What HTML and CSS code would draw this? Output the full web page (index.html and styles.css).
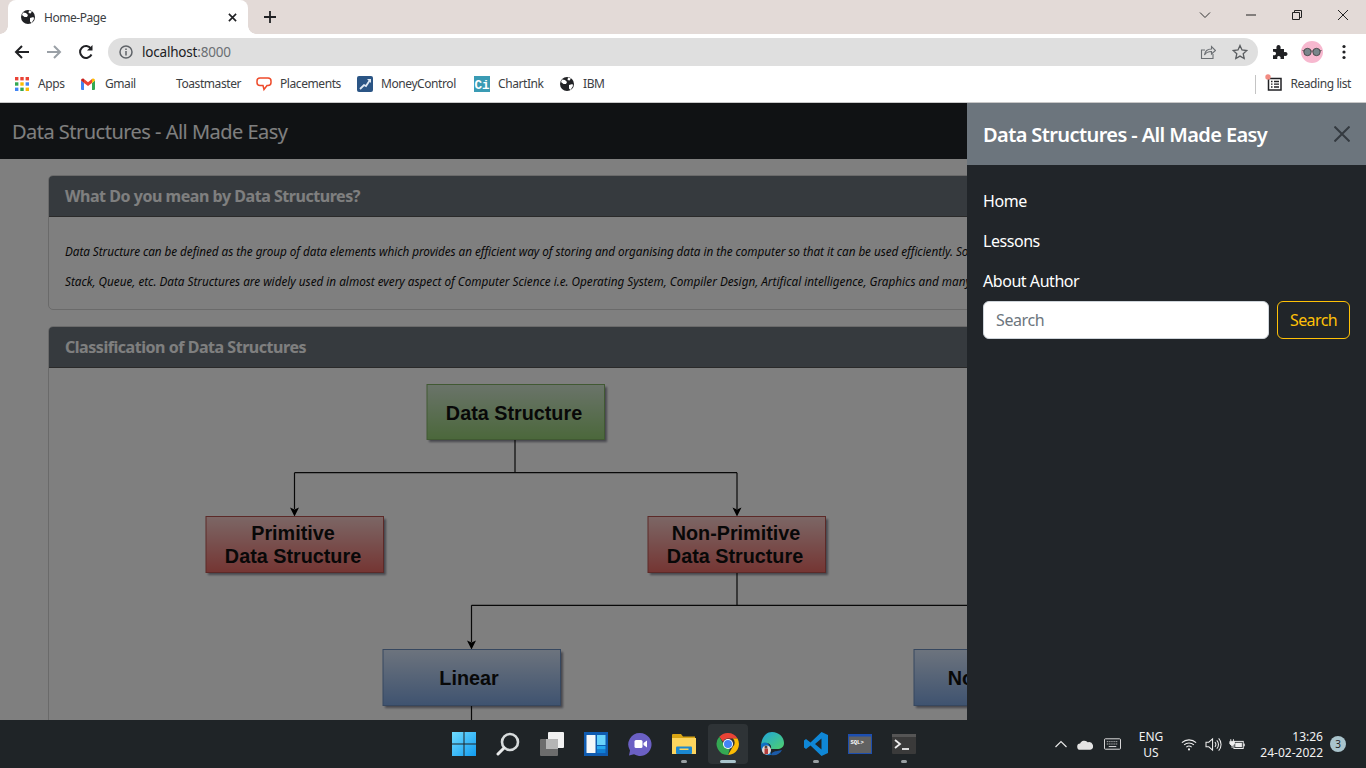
FILE: index.html
```html
<!DOCTYPE html>
<html lang="en">
<head>
<meta charset="utf-8">
<title>Home-Page</title>
<link rel="stylesheet" href="styles.css">
</head>
<body>
<div class="desktop">
  <header class="browser">
    <div class="tabstrip">
      <div class="tab">
        <svg class="ico16" viewBox="0 0 16 16"><circle cx="8" cy="8" r="7" fill="#202124"/><path d="M3 3.500l3 .5 2 2-1 2-2.500 0L2 6zM9 1.500l3 1-1.500 2-2-.5zM10 9l3.500-1 .5 2-2.500 4-1.500-1.500z" fill="#fff"/></svg>
        <span class="tab-title">Home-Page</span>
        <svg class="tab-close" viewBox="0 0 10 10"><path d="M1 1l8 8M9 1l-8 8" stroke="#202124" stroke-width="1.800"/></svg>
      </div>
      <svg class="tab-new" viewBox="0 0 12 12"><path d="M6 0v12M0 6h12" stroke="#202124" stroke-width="1.800"/></svg>
      <div class="win-controls">
        <svg class="win-btn chev" viewBox="0 0 12 12"><path d="M1 3.500l5 5 5-5" fill="none" stroke="#333" stroke-width="1"/></svg>
        <svg class="win-btn min" viewBox="0 0 12 12"><path d="M1 6h10" stroke="#222" stroke-width="1"/></svg>
        <svg class="win-btn max" viewBox="0 0 12 12"><path d="M1.500 3.500h7v7h-7zM3.500 3.500v-2h7v7h-2" fill="none" stroke="#222" stroke-width="1"/></svg>
        <svg class="win-btn cls" viewBox="0 0 12 12"><path d="M1 1l10 10M11 1L1 11" stroke="#222" stroke-width="1"/></svg>
      </div>
    </div>
    <div class="toolbar">
      <svg class="nav-ico first" viewBox="0 0 16 16"><path d="M15 8H2M8 2L2 8l6 6" fill="none" stroke="#202124" stroke-width="2"/></svg>
      <svg class="nav-ico" viewBox="0 0 16 16"><path d="M1 8h13M8 2l6 6-6 6" fill="none" stroke="#9aa0a6" stroke-width="2"/></svg>
      <svg class="nav-ico" viewBox="0 0 16 16"><path d="M13.500 10.500A6 6 0 1 1 13 4.500" fill="none" stroke="#202124" stroke-width="2"/><path d="M14.500 1v5.500H9z" fill="#202124"/></svg>
      <div class="omnibox">
        <svg class="ico14" viewBox="0 0 14 14"><circle cx="7" cy="7" r="6" fill="none" stroke="#5f6368" stroke-width="1.500"/><path d="M7 6v4.500M7 3.500v1.500" stroke="#5f6368" stroke-width="1.500"/></svg>
        <span class="url"><span class="url-host">localhost</span>:8000</span>
        <svg class="omni-share" viewBox="0 0 16 16"><path d="M13 10v4.500H1.500V6H5" fill="none" stroke="#6b6f73" stroke-width="1.100"/><path d="M4.500 11c.5-4 3.500-6 7-6V2.500L15.500 6.500 11.500 10V7.500c-3 0-5.500 1-7 3.500z" fill="none" stroke="#6b6f73" stroke-width="1.100"/></svg>
        <svg class="omni-star" viewBox="0 0 16 16"><path d="M8 1.500l2 4.500 4.800.5-3.600 3.200 1 4.800L8 12.100l-4.200 2.400 1-4.800L1.200 6.500 6 6z" fill="none" stroke="#5a5d60" stroke-width="1.300"/></svg>
      </div>
      <svg class="tool-puzzle" viewBox="0 0 16 16"><path d="M1 5h3.500C4 2.500 5 1 6.500 1S9 2.500 8.500 5H12v3.200c2.300-.6 3.500.4 3.500 1.800s-1.200 2.400-3.500 1.800V15H8.500c.5-2.200-.5-3-1.800-3S5 12.800 5.300 15H1v-3.800c2 .5 3-.3 3-1.700S3 7.300 1 7.800z" fill="#202124"/></svg>
      <svg class="tool-avatar" viewBox="0 0 22 22"><circle cx="11" cy="11" r="11" fill="#f7b8cf"/><circle cx="6.500" cy="11" r="3.700" fill="#78858a" stroke="#3a3a3a" stroke-width=".8"/><circle cx="15.500" cy="11" r="3.700" fill="#78858a" stroke="#3a3a3a" stroke-width=".8"/><path d="M10.200 10h1.600M1.500 9.500L3 10M19 10l1.500-.5" stroke="#3a3a3a" stroke-width=".9"/></svg>
      <svg class="tool-menu" viewBox="0 0 4 16"><circle cx="2" cy="2.500" r="1.600" fill="#202124"/><circle cx="2" cy="8" r="1.600" fill="#202124"/><circle cx="2" cy="13.500" r="1.600" fill="#202124"/></svg>
    </div>
    <div class="bookmarks">
      <div class="bm bm-apps">
        <svg class="ico14" viewBox="0 0 14 14"><g><rect x="0" y="0" width="3.400" height="3.400" fill="#ea4335"/><rect x="5.300" y="0" width="3.400" height="3.400" fill="#ea4335"/><rect x="10.600" y="0" width="3.400" height="3.400" fill="#ea4335"/><rect x="0" y="5.300" width="3.400" height="3.400" fill="#34a853"/><rect x="5.300" y="5.300" width="3.400" height="3.400" fill="#fbbc04"/><rect x="10.600" y="5.300" width="3.400" height="3.400" fill="#4285f4"/><rect x="0" y="10.600" width="3.400" height="3.400" fill="#4285f4"/><rect x="5.300" y="10.600" width="3.400" height="3.400" fill="#34a853"/><rect x="10.600" y="10.600" width="3.400" height="3.400" fill="#fbbc04"/></g></svg>
        <span>Apps</span>
      </div>
      <div class="bm bm-gmail">
        <svg class="ico14" viewBox="0 0 14 12"><path d="M0 2.500V11a1 1 0 0 0 1 1h2V5z" fill="#4285f4"/><path d="M14 2.500V11a1 1 0 0 1-1 1h-2V5z" fill="#34a853"/><path d="M3 5V1L7 4.200 11 1v4L7 8z" fill="#ea4335"/><path d="M0 2.500C0 .8 1.800 0 3 1v4z" fill="#c5221f"/><path d="M14 2.500C14 .8 12.200 0 11 1v4z" fill="#fbbc04"/></svg>
        <span>Gmail</span>
      </div>
      <div class="bm bm-toast"><span>Toastmaster</span></div>
      <div class="bm bm-place">
        <svg class="ico16" viewBox="0 0 16 16"><path d="M4 2h8a3 3 0 0 1 3 3v1.500a3 3 0 0 1-3 3h-1L8 13.500 7 9.500H4a3 3 0 0 1-3-3V5a3 3 0 0 1 3-3z" fill="none" stroke="#ee4b2b" stroke-width="1.500"/></svg>
        <span>Placements</span>
      </div>
      <div class="bm bm-money">
        <svg class="ico16" viewBox="0 0 16 16"><rect width="16" height="16" rx="2" fill="#2b5585"/><path d="M3 13l4-4 2 1 4-6" fill="none" stroke="#dfe8f2" stroke-width="1.800"/><path d="M10 3h4v4z" fill="#dfe8f2"/></svg>
        <span>MoneyControl</span>
      </div>
      <div class="bm bm-chart">
        <svg class="ico16" viewBox="0 0 16 16"><rect width="16" height="16" fill="#3a9bb4"/><text x="8" y="12.500" class="ci-text">Ci</text></svg>
        <span>ChartInk</span>
      </div>
      <div class="bm bm-ibm">
        <svg class="ico16" viewBox="0 0 16 16"><circle cx="8" cy="8" r="7" fill="#202124"/><path d="M3 3.500l3 .5 2 2-1 2-2.500 0L2 6zM9 1.500l3 1-1.500 2-2-.5zM10 9l3.500-1 .5 2-2.500 4-1.500-1.500z" fill="#fff"/></svg>
        <span>IBM</span>
      </div>
      <div class="reading">
        <svg class="read-ico" viewBox="0 0 18 18"><path d="M3.500 4.500h12.500v11.500H3.500z" fill="none" stroke="#202124" stroke-width="1.500"/><path d="M6 7.500h1.500M9 7.500h5M6 10.200h1.500M9 10.200h5M6 13h1.500M9 13h5" stroke="#202124" stroke-width="1.300"/><circle cx="3" cy="3" r="2.700" fill="#f28b82"/></svg>
        <span>Reading list</span>
      </div>
    </div>
  </header>

  <main class="page">
    <nav class="navbar">Data Structures - All Made Easy</nav>
    <div class="content">
      <section class="card">
        <h2 class="card-head">What Do you mean by Data Structures?</h2>
        <div class="card-body">
          <p class="lead-line tight">Data Structure can be defined as the group of data elements which provides an efficient way of storing and organising data in the computer so that it can be used efficiently. So</p>
          <p class="lead-line">Stack, Queue, etc. Data Structures are widely used in almost every aspect of Computer Science i.e. Operating System, Compiler Design, Artifical intelligence, Graphics and many</p>
        </div>
      </section>
      <section class="card">
        <h2 class="card-head">Classification of Data Structures</h2>
        <svg class="diagram" viewBox="0 0 1268 360" width="1268" height="360">
          <defs>
            <linearGradient id="gGreen" x1="0" y1="0" x2="0" y2="1"><stop offset="0" stop-color="#d5e8d4"/><stop offset="1" stop-color="#97d077"/></linearGradient>
            <linearGradient id="gRed" x1="0" y1="0" x2="0" y2="1"><stop offset="0" stop-color="#f8cecc"/><stop offset="1" stop-color="#ea6b66"/></linearGradient>
            <linearGradient id="gBlue" x1="0" y1="0" x2="0" y2="1"><stop offset="0" stop-color="#dae8fc"/><stop offset="1" stop-color="#7ea6e0"/></linearGradient>
            <filter id="soft" x="-10%" y="-10%" width="125%" height="130%"><feGaussianBlur stdDeviation="1.300"/></filter>
          </defs>
          <g class="shadows" filter="url(#soft)">
            <rect x="380" y="19" width="178" height="55"/>
            <rect x="159" y="151" width="178" height="56"/>
            <rect x="601" y="151" width="178" height="56"/>
            <rect x="336" y="284" width="178" height="56"/>
            <rect x="867" y="284" width="178" height="56"/>
          </g>
          <g class="links">
            <path d="M466 71V104.700M245.500 104.700H688M245.500 104.700V141M688 104.700V141"/>
            <path d="M688 204V237.300M422.500 237.300H1132M422.500 237.300V274M422.500 337V360"/>
          </g>
          <path class="arrow" d="M241 139.500l4.500 2 4.500-2-4.500 9zM683.500 139.500l4.500 2 4.500-2-4.500 9zM418 272.500l4.500 2 4.500-2-4.500 9z"/>
          <rect class="box green" x="378" y="16.500" width="177.500" height="55"/>
          <rect class="box red" x="157" y="148.500" width="177.500" height="56"/>
          <rect class="box red" x="599" y="148.500" width="177.500" height="56"/>
          <rect class="box blue" x="334" y="281.500" width="177.500" height="56"/>
          <rect class="box blue" x="865" y="281.500" width="177.500" height="56"/>
          <text class="dtext" x="465" y="52">Data Structure</text>
          <text class="dtext" x="244" y="172">Primitive</text>
          <text class="dtext" x="244" y="195">Data Structure</text>
          <text class="dtext" x="687" y="172">Non-Primitive</text>
          <text class="dtext" x="686" y="195">Data Structure</text>
          <text class="dtext" x="420" y="317">Linear</text>
          <text class="dtext" x="951" y="317">Non-Linear</text>
        </svg>
      </section>
    </div>
    <div class="backdrop"></div>
    <aside class="panel">
      <div class="panel-head">
        <h5 class="panel-title">Data Structures - All Made Easy</h5>
        <svg class="panel-close" viewBox="0 0 16 16"><path d="M.5.500l15 15M15.500.500l-15 15" stroke="#343a40" stroke-width="2"/></svg>
      </div>
      <div class="panel-body">
        <a class="panel-link">Home</a>
        <a class="panel-link">Lessons</a>
        <a class="panel-link">About Author</a>
        <form class="search">
          <input class="search-input" type="text" placeholder="Search">
          <button class="search-btn" type="button">Search</button>
        </form>
      </div>
    </aside>
  </main>

  <footer class="taskbar">
    <div class="tb-spacer"></div>
    <div class="tb-apps">
      <div class="tb-app">
        <svg class="tb-ico" viewBox="0 0 24 24"><defs><linearGradient id="w1" x1="0" y1="0" x2="1" y2="1"><stop offset="0" stop-color="#6fdcff"/><stop offset="1" stop-color="#119bf0"/></linearGradient></defs><path d="M0 0h11.500v11.500H0zM12.500 0H24v11.500H12.500zM0 12.500h11.500V24H0zM12.500 12.500H24V24H12.500z" fill="url(#w1)"/></svg>
      </div>
      <div class="tb-app">
        <svg class="tb-ico" viewBox="0 0 24 24"><circle cx="14" cy="10" r="8" fill="none" stroke="#d7dbdc" stroke-width="2.600"/><path d="M8 16l-6 6" stroke="#e8eaea" stroke-width="3" stroke-linecap="round"/></svg>
      </div>
      <div class="tb-app">
        <svg class="tb-ico" viewBox="0 0 24 24"><rect x="8" y="0" width="16" height="16" rx="1" fill="#f1f1f1"/><rect x="0" y="7" width="18" height="17" rx="1" fill="#6c6c6c"/><rect x="6" y="7" width="12" height="10" fill="#b5b5b5"/></svg>
      </div>
      <div class="tb-app">
        <svg class="tb-ico" viewBox="0 0 24 24"><rect width="24" height="24" fill="#0f5bb0"/><rect x="2.500" y="3" width="9" height="18" rx=".5" fill="#f5f7f8"/><rect x="13" y="3" width="8.500" height="10" fill="#69d3fb"/><rect x="13" y="14" width="8.500" height="3.500" fill="#25a8ee"/><rect x="13" y="18" width="8.500" height="3" fill="#0f7fd6"/></svg>
      </div>
      <div class="tb-app">
        <svg class="tb-ico" viewBox="0 0 24 24"><path d="M12 1a11.500 11.500 0 1 1-6 21.300L1 23.500l1-5A11.500 11.500 0 0 1 12 1z" fill="#6b60c4"/><rect x="6.500" y="8" width="8" height="8" rx="1.500" fill="#fff"/><path d="M15.500 11l3.500-2.500v7L15.500 13z" fill="#fff"/></svg>
      </div>
      <div class="tb-app with-pip">
        <svg class="tb-ico" viewBox="0 0 24 24"><path d="M0 3a1 1 0 0 1 1-1h8l2 2.500h12v3H0z" fill="#d9a514"/><path d="M0 6h24v16H0z" fill="#fcd55e"/><rect x="4" y="14.500" width="16" height="7.500" rx="1" fill="#1b88d0"/><rect x="7.500" y="16.500" width="9" height="1.500" fill="#fcd55e"/></svg>
      </div>
      <div class="tb-app active">
        <svg class="tb-ico" viewBox="0 0 24 24"><path d="M12 1a11 11 0 0 1 9.500 5.500H12a5.500 5.500 0 0 0-5 3.200L3.300 4.800A11 11 0 0 1 12 1z" fill="#ea4335"/><path d="M21.500 6.500A11 11 0 0 1 12 23l4.800-8.200a5.500 5.500 0 0 0 0-8.300z" fill="#fbbc04"/><path d="M12 23A11 11 0 0 1 3.300 4.800L8 13c1 2.500 4 3.500 6 2.800z" fill="#34a853"/><circle cx="12" cy="12" r="5" fill="#fff"/><circle cx="12" cy="12" r="4" fill="#4285f4"/></svg>
      </div>
      <div class="tb-app">
        <svg class="tb-ico" viewBox="0 0 24 24"><defs><linearGradient id="e1" x1="0" y1="0" x2="1" y2="1"><stop offset="0" stop-color="#1fa5de"/><stop offset="1" stop-color="#4fd06c"/></linearGradient></defs><path d="M12 0c7 0 12 5 12 11 0 4-3 6-7 6h-6c1-5-3-8-10-4C2 5 6 0 12 0z" fill="url(#e1)"/><path d="M1 12c4-3 8-1 9 3l1 8c-6 1-11-3-10-11z" fill="#0f6fc2"/><path d="M11 23c5 1 9-1 11-5l-5 1c-2 .5-5 .5-6 4z" fill="#1b5aa8"/><circle cx="6.500" cy="18" r="4.500" fill="#e4d9d3"/><path d="M4.500 16.500h3.500v5.500H4.500z" fill="#b33a3a"/><circle cx="6" cy="15" r="1.500" fill="#5a4238"/></svg>
      </div>
      <div class="tb-app with-pip">
        <svg class="tb-ico" viewBox="0 0 24 24"><path d="M17.500 0L24 3v18l-6.500 3L6.500 13.500 2 17l-2-1.500v-7L2 7l4.500 3.500zM17.500 6.500L11 12l6.500 5.500z" fill="#0f87d6"/></svg>
      </div>
      <div class="tb-app">
        <svg class="tb-ico" viewBox="0 0 24 20"><rect width="24" height="20" fill="#1d4fb0"/><rect x="1" y="2.500" width="22" height="16.500" fill="#616161"/><text x="2.500" y="9.500" class="sql-text">SQL&gt;</text></svg>
      </div>
      <div class="tb-app with-pip">
        <svg class="tb-ico" viewBox="0 0 24 20"><rect width="24" height="20" rx="1" fill="#3a3a3a"/><rect width="24" height="3" fill="#555"/><path d="M3 6l5 4-5 4" fill="none" stroke="#eee" stroke-width="1.800"/><path d="M10 15h7" stroke="#eee" stroke-width="1.800"/></svg>
      </div>
    </div>
    <div class="tray">
      <svg class="tray-chev" viewBox="0 0 12 8"><path d="M.5 7L6 1.500 11.500 7" fill="none" stroke="#e6e6e6" stroke-width="1.200"/></svg>
      <svg class="tray-cloud" viewBox="0 0 18 12"><path d="M4 12a3.500 3.500 0 0 1-.5-7A5 5 0 0 1 12 3.500a4 4 0 0 1 3 8.500z" fill="#e3e3e3"/></svg>
      <svg class="tray-kbd" viewBox="0 0 18 12"><rect x=".5" y=".5" width="17" height="11" rx="1" fill="none" stroke="#e6e6e6"/><path d="M3 3.500h12M3 6h12" stroke="#e6e6e6" stroke-dasharray="1 1"/><path d="M5 8.700h8" stroke="#e6e6e6"/></svg>
      <div class="tray-lang"><span>ENG</span><span>US</span></div>
      <svg class="tray-wifi" viewBox="0 0 18 14"><path d="M1 5a11.500 11.500 0 0 1 16 0M3.500 7.500a8 8 0 0 1 11 0M6 10a4.500 4.500 0 0 1 6 0" fill="none" stroke="#eee" stroke-width="1.200"/><circle cx="9" cy="12.500" r="1.200" fill="#eee"/></svg>
      <svg class="tray-vol" viewBox="0 0 18 16"><path d="M1 5.500h3L8 2v12L4 10.500H1z" fill="none" stroke="#eee" stroke-width="1.100"/><path d="M10.500 5.500a3.500 3.500 0 0 1 0 5M12.500 3.500a6.500 6.500 0 0 1 0 9M14.500 1.500a9.500 9.500 0 0 1 0 13" fill="none" stroke="#eee" stroke-width="1.100"/></svg>
      <svg class="tray-batt" viewBox="0 0 18 14"><rect x="5.500" y="3.500" width="10.500" height="8" fill="none" stroke="#eee" stroke-width="1.100"/><rect x="7" y="5" width="7.500" height="5" fill="#eee"/><rect x="16.200" y="6" width="1.500" height="3" fill="#eee"/><path d="M1 3.500h5v3l-2.500 2-2.500-2zM2 1v2.500M5 1v2.500M3.500 8v3" stroke="#eee" fill="#eee"/></svg>
      <div class="tray-clock"><span>13:26</span><span>24-02-2022</span></div>
      <div class="tray-badge">3</div>
    </div>
  </footer>
</div>
</body>
</html>
```

FILE: styles.css
```css
* { box-sizing: border-box; }
html, body { margin: 0; padding: 0; height: 100%; overflow: hidden; }
body { font-family: "Noto Sans", "Open Sans", sans-serif; background: #fff; }
.desktop { width: 1366px; height: 768px; display: flex; flex-direction: column; overflow: hidden; }
svg { display: block; flex: none; }
.ico14 { width: 14px; height: 14px; }
.ico16 { width: 16px; height: 16px; }

/* browser chrome */
.browser { flex: none; height: 103px; display: flex; flex-direction: column; border-bottom: 1px solid #c8c8c8; }
.tabstrip { height: 34px; background: #e3dad7; display: flex; align-items: center; padding-left: 8px; }
.tab { width: 240px; height: 34px; background: #fff; border-radius: 8px 8px 0 0; display: flex; align-items: center; padding: 0 11px 0 12px; position: relative; }
.tab::before, .tab::after { content: ""; position: absolute; bottom: 0; width: 8px; height: 8px; }
.tab::before { left: -8px; background: radial-gradient(circle at 0 0, transparent 7.500px, #fff 8px); }
.tab::after { right: -8px; background: radial-gradient(circle at 100% 0, transparent 7.500px, #fff 8px); }
.tab-title { margin-left: 8px; font-size: 12px; letter-spacing: -.45px; color: #3c4043; flex: 1; }
.tab-close { width: 9px; height: 9px; }
.tab-new { width: 12px; height: 12px; margin-left: 16px; }
.win-controls { margin-left: auto; display: flex; align-items: center; height: 34px; padding-right: 17px; margin-top: -4px; }
.win-btn { width: 12px; height: 12px; }
.chev { margin-right: 34px; }
.min { margin-right: 34px; }
.max { margin-right: 34px; }

.toolbar { height: 34px; background: #fff; display: flex; align-items: center; padding-top: 2px; }
.nav-ico { width: 16px; height: 16px; margin-right: 16px; }
.nav-ico.first { margin-left: 14px; }
.omnibox { width: 1150px; height: 28px; margin-left: -2px; border-radius: 14px; background: #dfdfdf; display: flex; align-items: center; padding-left: 11px; }
.url { margin-left: 9px; font-size: 13.500px; color: #6b6f73; letter-spacing: -.2px; flex: 1; }
.url-host { color: #202124; }
.omni-share { width: 16px; height: 16px; margin-right: 16px; }
.omni-star { width: 16px; height: 16px; margin-right: 10px; }
.tool-puzzle { width: 16px; height: 16px; margin-left: 14px; }
.tool-avatar { width: 22px; height: 22px; margin-left: 13px; }
.tool-menu { width: 4px; height: 16px; margin-left: 19px; }

.bookmarks { height: 34px; background: #fff; display: flex; align-items: center; font-size: 12px; letter-spacing: -.42px; color: #3c4043; padding-left: 15px; padding-bottom: 2px; }
.bm { display: flex; align-items: center; gap: 8px; flex: none; white-space: nowrap; }
.bm span { margin-top: -1px; }
.bm-apps { width: 66px; gap: 9px; }
.bm-gmail { width: 80px; gap: 10px; }
.bm-toast { width: 95px; padding-left: 15px; }
.bm-place { width: 101px; }
.bm-money { width: 117px; }
.bm-chart { width: 85px; }
.bm-ibm { width: 60px; }
.ci-text { font: 700 12.500px "Liberation Mono", monospace; letter-spacing: 0; fill: #fff; text-anchor: middle; }
.reading { margin-left: auto; display: flex; align-items: center; height: 19px; border-left: 1px solid #c4c4c4; padding-left: 9px; padding-right: 15px; gap: 7px; white-space: nowrap; }
.reading span { margin-top: -1px; }
.read-ico { width: 18px; height: 18px; margin-top: -2px; }

/* page */
.page { flex: 1; min-height: 0; position: relative; overflow: hidden; background: #fff; }
.navbar { height: 56px; background: #212529; color: #fff; font-size: 20px; letter-spacing: -.52px; line-height: 58px; padding-left: 12px; }
.content { padding: 16px 48px 0; display: flex; flex-direction: column; gap: 16px; }
.card { border: 1px solid #d4d4d4; border-radius: 5px; overflow: hidden; }
.card-head { margin: 0; height: 41px; background: #6c757d; color: #fff; font-size: 16px; letter-spacing: -.46px; line-height: 41px; font-weight: 700; padding-left: 16px; border-bottom: 1px solid #555; }
.card-body { padding: 19px 16px 13px; }
.lead-line { margin: 0; height: 30px; line-height: 30px; font-size: 11.720px; font-style: italic; color: #111; white-space: nowrap; }
.lead-line.tight { letter-spacing: -.045px; }
.diagram { background: #fff; }
.shadows rect { fill: #8e8e9a; }
.links path { fill: none; stroke: #111; stroke-width: 1.200; }
.arrow { fill: #000; }
.box { stroke-width: 1; }
.green { fill: url(#gGreen); stroke: #82b366; }
.red { fill: url(#gRed); stroke: #b85450; }
.blue { fill: url(#gBlue); stroke: #6c8ebf; }
.dtext { font: 700 19.800px "Liberation Sans", Arial, sans-serif; fill: #111; text-anchor: middle; }
.backdrop { position: absolute; inset: 0; background: rgba(0, 0, 0, .5); }

/* offcanvas */
.panel { position: absolute; top: 0; right: 0; bottom: 0; width: 399px; background: #212529; color: #fff; display: flex; flex-direction: column; }
.panel-head { height: 62px; background: #6c757d; display: flex; align-items: center; justify-content: space-between; padding: 0 16px; }
.panel-title { margin: 0; padding-top: 2px; font-size: 20px; font-weight: 600; letter-spacing: -.6px; line-height: 24px; white-space: nowrap; }
.panel-close { width: 16px; height: 16px; }
.panel-body { padding: 16px; display: flex; flex-direction: column; }
.panel-link { font-size: 16px; letter-spacing: -.45px; line-height: 24px; padding: 8px 0; color: #fff; }
.search { display: flex; gap: 8px; }
.search-input { width: 286px; height: 38px; background: #fff; border: 1px solid #ced4da; border-radius: 6px; padding: 0 12px; font: 16px "Noto Sans", sans-serif; letter-spacing: -.4px; color: #212529; }
.search-input::placeholder { color: #6c757d; opacity: 1; }
.search-btn { width: 73px; height: 38px; background: transparent; border: 1px solid #ffc107; border-radius: 6px; font: 16px "Noto Sans", sans-serif; letter-spacing: -.6px; color: #ffc107; padding: 0; }

/* taskbar */
.taskbar { flex: none; height: 48px; background: #1f2427; display: flex; color: #fff; position: relative; }
.tb-spacer { width: 442px; flex: none; }
.tb-apps { display: flex; flex: none; }
.tb-app { width: 44px; height: 48px; display: flex; align-items: center; justify-content: center; position: relative; }
.tb-ico { width: 24px; height: 24px; }
.tb-app.with-pip::after { content: ""; position: absolute; bottom: 5px; left: 19px; width: 6px; height: 3px; border-radius: 2px; background: #9aa0a3; }
.tb-app.active::before { content: ""; position: absolute; left: 2px; right: 2px; top: 4px; bottom: 4px; border-radius: 4px; background: rgba(255, 255, 255, .07); }
.tb-app.active::after { content: ""; position: absolute; bottom: 5px; left: 14px; width: 16px; height: 3px; border-radius: 2px; background: #a9c4cc; }
.tb-app.active .tb-ico { position: relative; }
.sql-text { font: 700 5.500px "Liberation Mono", monospace; fill: #fff; }
.tray { flex: 1; display: flex; align-items: center; font-size: 12px; color: #f2f2f2; padding-left: 129px; }
.tray-chev { width: 12px; height: 8px; }
.tray-cloud { width: 16px; height: 11px; margin-left: 10px; }
.tray-kbd { width: 17px; height: 12px; margin-left: 11px; }
.tray-lang { width: 36px; margin-left: 12px; padding-top: 2px; display: flex; flex-direction: column; align-items: center; line-height: 16px; }
.tray-wifi { width: 16px; height: 13px; margin-left: 12px; }
.tray-vol { width: 17px; height: 15px; margin-left: 8px; }
.tray-batt { width: 16px; height: 13px; margin-left: 7px; }
.tray-clock { width: 78px; padding-top: 1px; display: flex; flex-direction: column; align-items: flex-end; line-height: 16px; }
.tray-badge { width: 16px; height: 16px; margin-left: 7px; border-radius: 50%; background: #a9c4cc; color: #1f2427; font-size: 10px; line-height: 16px; text-align: center; }
```
